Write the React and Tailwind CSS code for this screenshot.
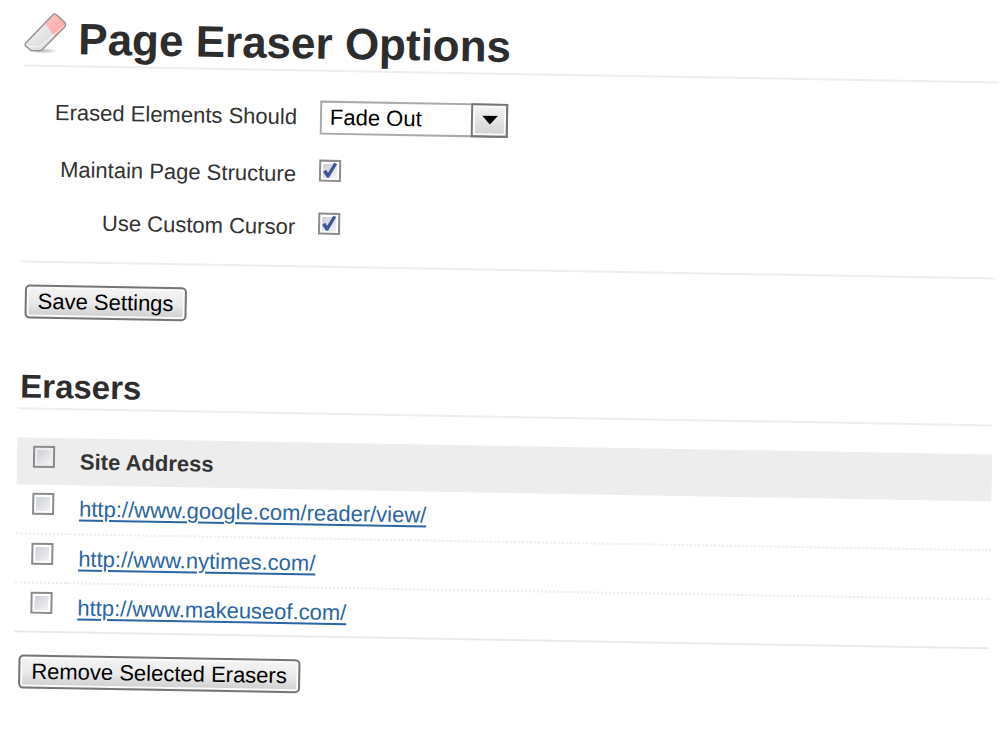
import React, { useState } from 'react';

const SITES = [
  'http://www.google.com/reader/view/',
  'http://www.nytimes.com/',
  'http://www.makeuseof.com/',
];

function EraserIcon() {
  return (
    <svg viewBox="0 0 44 42" className="w-11 h-[42px] shrink-0" aria-hidden="true">
      <defs>
        <linearGradient id="rubber" x1="0" y1="0" x2="1" y2="1">
          <stop offset="0" stopColor="#f4f4f4" />
          <stop offset="1" stopColor="#d6d6d6" />
        </linearGradient>
        <linearGradient id="tip" x1="0" y1="0" x2="1" y2="1">
          <stop offset="0" stopColor="#ffc9c9" />
          <stop offset="1" stopColor="#ff9c9c" />
        </linearGradient>
        <radialGradient id="shade">
          <stop offset="0" stopColor="#000" stopOpacity="0.28" />
          <stop offset="1" stopColor="#000" stopOpacity="0" />
        </radialGradient>
      </defs>
      <ellipse cx="19" cy="38" rx="15" ry="3" fill="url(#shade)" />
      <path d="M1 31 L19 11 L32 23 L17 37 H6 L1 33 Z" fill="url(#rubber)" />
      <path d="M20 11 L29 1 H31 L41 10 V13 L31 24 Z" fill="url(#tip)" />
      <path d="M1 31 L4 33 L7 34 H16 L41 11" fill="none" stroke="#fff" strokeOpacity="0.7" />
      <path
        d="M1 31 L28 2 Q30 0 32 2 L40 9 Q42 11 40 14 L18 37 Q17 38 15 38 H7 L1 33 Z"
        fill="none"
        stroke="#9a8e8e"
        strokeWidth="1.4"
      />
    </svg>
  );
}

function Checkbox(props) {
  return (
    <span className="relative block w-[22px] h-[22px]">
      <input
        type="checkbox"
        className="peer appearance-none block w-[22px] h-[22px] border-2 border-[#8c8c8c] p-0.5 bg-white bg-linear-to-br from-[#c6cad4] to-[#f8f8f8] bg-clip-content"
        {...props}
      />
      <svg
        viewBox="0 0 22 22"
        className="absolute inset-0 w-full h-full pointer-events-none invisible peer-checked:visible"
        aria-hidden="true"
      >
        <path d="M4 12 L7 10 L9 13 L15 3 L18 4 L10 18 H8 Z" fill="#3f5797" />
      </svg>
    </span>
  );
}

function Button({ children }) {
  return (
    <button
      type="button"
      className="ml-[5px] h-[34px] px-[11px] leading-[30px] text-black whitespace-nowrap border-2 border-[#757575] rounded-[5px] bg-linear-to-b from-[#f4f4f4] from-0% via-[#ebebeb] via-50% to-[#cdcdcd] shadow-[inset_0_0_0_2px_#fafafa]"
    >
      {children}
    </button>
  );
}

function Option({ id, label, labelClass = '', children }) {
  return (
    <div className="flex items-center h-9">
      <label htmlFor={id} className={`w-[274px] mr-[23px] text-right whitespace-nowrap ${labelClass}`}>
        {label}
      </label>
      {children}
    </div>
  );
}

export default function App() {
  const [selected, setSelected] = useState([]);
  const allSelected = selected.length === SITES.length;

  const toggle = (site) => {
    setSelected(selected.includes(site) ? selected.filter((s) => s !== site) : [...selected, site]);
  };

  return (
    <div className="min-h-screen overflow-hidden bg-white">
      <main className="rotate-1 origin-top-left pl-[25px] pb-8 font-['Liberation_Sans',Arial,sans-serif] text-[22px] leading-7 text-[#333]">
        {/* Title */}
        <header className="flex items-start pt-3 h-[66px] border-b-2 border-[#eee]">
          <EraserIcon />
          <h1 className="ml-2.5 text-[44px] leading-[52px] font-bold text-[#2d2d2d] whitespace-nowrap">
            Page Eraser Options
          </h1>
        </header>

        {/* Settings */}
        <section className="flex flex-col gap-[17px] pt-7 pb-6 border-b-2 border-[#eee]">
          <Option id="effect" label="Erased Elements Should">
            <span className="relative block w-[188px] h-[34px]">
              <select
                id="effect"
                className="appearance-none block w-full h-full pl-2 text-black bg-white border-2 border-[#a9a9b0]"
              >
                <option>Fade Out</option>
                <option>Disappear</option>
              </select>
              <span className="absolute inset-y-0 right-0 w-[37px] flex items-center justify-center border-2 border-[#757575] bg-linear-to-b from-[#f4f4f4] to-[#d2d2d2] shadow-[inset_0_0_0_2px_#fafafa] pointer-events-none">
                <svg viewBox="0 0 16 10" className="w-4 h-2.5" aria-hidden="true">
                  <path d="M0 0 H16 L8 9 Z" fill="#000" />
                </svg>
              </span>
            </span>
          </Option>
          <Option id="structure" label="Maintain Page Structure" labelClass="pt-2">
            <Checkbox id="structure" defaultChecked />
          </Option>
          <Option id="cursor" label="Use Custom Cursor" labelClass="pt-2">
            <Checkbox id="cursor" defaultChecked />
          </Option>
        </section>

        <div className="flex pt-[22px]">
          <Button>Save Settings</Button>
        </div>

        {/* Erasers */}
        <h2 className="mt-12 pl-0.5 pb-px text-[33px] leading-10 font-bold text-[#2d2d2d] border-b-2 border-[#eee]">
          Erasers
        </h2>

        <table className="w-full mt-7 border-collapse text-left">
          <thead>
            <tr className="h-[47px] bg-[#ededed]">
              <th className="w-[51px] pl-4 pt-2 align-top">
                <Checkbox
                  aria-label="Select all"
                  checked={allSelected}
                  onChange={() => setSelected(allSelected ? [] : SITES)}
                />
              </th>
              <th className="pl-3 font-bold">Site Address</th>
            </tr>
          </thead>
          <tbody>
            {SITES.map((site) => (
              <tr key={site} className="h-[49px] border-b-2 border-dotted border-[#ebebeb] last:border-solid">
                <td className="pl-4 pt-2 align-top">
                  <Checkbox
                    aria-label={site}
                    checked={selected.includes(site)}
                    onChange={() => toggle(site)}
                  />
                </td>
                <td className="pl-3">
                  <a href={site} className="text-[#2b65a3] underline decoration-2 underline-offset-3">
                    {site}
                  </a>
                </td>
              </tr>
            ))}
          </tbody>
        </table>

        <div className="flex pt-[22px]">
          <Button>Remove Selected Erasers</Button>
        </div>
      </main>
    </div>
  );
}
